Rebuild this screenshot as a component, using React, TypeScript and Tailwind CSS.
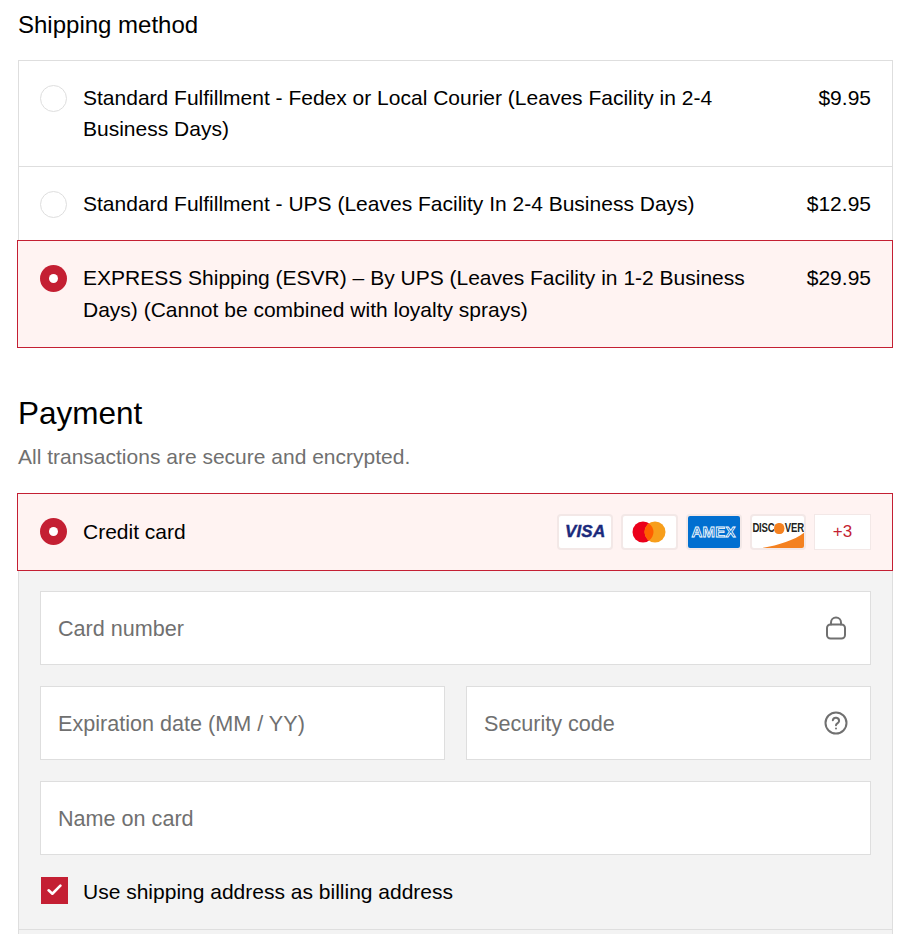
const font = { fontFamily: '"Liberation Sans", Arial, sans-serif' };

function Radio({ checked, className }: { checked?: boolean; className?: string }) {
  if (checked) {
    return (
      <span className={`flex h-[27px] w-[27px] shrink-0 items-center justify-center rounded-full bg-[#c41f33] ${className ?? ''}`}>
        <span className="h-[9px] w-[9px] rounded-full bg-white" />
      </span>
    );
  }
  return <span className={`h-[27px] w-[27px] shrink-0 rounded-full border border-[#dedede] bg-white ${className ?? ''}`} />;
}

function ShippingRow({ label, price, checked, last }: { label: string; price: string; checked?: boolean; last?: boolean }) {
  return (
    <div
      className={`flex items-start pt-[21px] ${
        checked
          ? '-ml-[2px] -mr-px border border-[#c41f33] bg-[#fff3f2] pb-[22px] pl-[22px] pr-[21px]'
          : `pb-[21px] px-[21px] ${last ? '' : 'border-b border-[#dedede]'}`
      }`}
    >
      <Radio checked={checked} className="mt-[3px]" />
      <div className="ml-4 flex-1 pr-14 text-[21px] leading-[31.5px] text-black">{label}</div>
      <div className="text-[21px] leading-[31.5px] text-black">{price}</div>
    </div>
  );
}

function CardBadge({ className, children }: { className?: string; children: React.ReactNode }) {
  return (
    <div className={`relative flex h-[36px] w-[56.25px] items-center justify-center overflow-hidden rounded-[4px] border-2 border-[#f3e8e7] ${className ?? 'bg-white'}`}>
      {children}
    </div>
  );
}

function Field({ placeholder, icon }: { placeholder: string; icon?: React.ReactNode }) {
  return (
    <div className="flex h-[74px] items-center justify-between border border-[#dedede] bg-white pl-[17px] pr-[22px] text-[21.6px] text-[#707070]">
      <span className="pt-[2px]">{placeholder}</span>
      {icon}
    </div>
  );
}

export default function App() {
  return (
    <div className="h-[934px] w-[903px] overflow-hidden bg-white pl-[18px] pr-[10px]" style={font}>
      <h2 className="pt-[9px] text-[24px] leading-[31px] text-black">Shipping method</h2>

      <div className="mt-[19.6px] border border-b-0 border-[#dedede]">
        <ShippingRow label="Standard Fulfillment - Fedex or Local Courier (Leaves Facility in 2-4 Business Days)" price="$9.95" />
        <ShippingRow label="Standard Fulfillment - UPS (Leaves Facility In 2-4 Business Days)" price="$12.95" last />
        <ShippingRow label="EXPRESS Shipping (ESVR) – By UPS (Leaves Facility in 1-2 Business Days) (Cannot be combined with loyalty sprays)" price="$29.95" checked />
      </div>

      <h2 className="mt-[45.4px] text-[31.5px] leading-[40px] text-black">Payment</h2>
      <p className="mt-[8px] text-[21px] leading-[31.5px] text-[#707070]">All transactions are secure and encrypted.</p>

      <div className="-ml-px mt-[20px] flex h-[78px] items-center border border-[#c41f33] bg-[#fff3f2] pl-[22px] pr-[21px]">
        <Radio checked />
        <span className="ml-4 flex-1 text-[21px] text-black">Credit card</span>
        <div className="flex items-center gap-[8px]">
          <CardBadge>
            <span className="text-[17px] font-bold italic tracking-[0.2px] text-[#1a2a7c]" style={{ WebkitTextStroke: '0.4px #1a2a7c' }}>
              VISA
            </span>
          </CardBadge>
          <CardBadge>
            <svg width="34" height="22" viewBox="0 0 34 22">
              <circle cx="11" cy="11" r="10.5" fill="#eb001b" />
              <circle cx="23" cy="11" r="10.5" fill="#f79e1b" />
              <path d="M17 2.4a10.5 10.5 0 0 1 0 17.2a10.5 10.5 0 0 1 0-17.2z" fill="#ff5f00" />
            </svg>
          </CardBadge>
          <CardBadge className="bg-[#016fd0]">
            <span className="text-[15px] font-bold tracking-[0.2px] text-[#016fd0]" style={{ WebkitTextStroke: '0.8px white' }}>
              AMEX
            </span>
          </CardBadge>
          <CardBadge>
            <svg className="absolute inset-0" width="53" height="32" viewBox="0 0 53 32">
              <path d="M10 32C28 29 43 24 53 16V32z" fill="#f48120" />
            </svg>
            <span className="relative -mt-[7px] flex shrink-0 scale-x-[0.8] items-center whitespace-nowrap text-[12px] font-bold tracking-[-0.3px] text-[#231f20]">
              DISC
              <span className="inline-block h-[11px] w-[13px] rounded-full bg-[#f48120]" />
              VER
            </span>
          </CardBadge>
          <div className="flex h-[36px] w-[57px] items-center justify-center border border-[#f3e8e7] bg-white text-[17px] text-[#c41f33]">+3</div>
        </div>
      </div>

      <div className="border-x border-[#dedede] bg-[#f3f3f3] px-[21px] pt-[20px]">
        <div className="flex flex-col gap-[21px]">
          <Field
            placeholder="Card number"
            icon={
              <svg className="mr-px" width="22" height="24" viewBox="0 0 22 24" fill="none" stroke="#707070" strokeWidth="2" strokeLinecap="round" strokeLinejoin="round">
                <rect x="2" y="8.5" width="18" height="14" rx="3.5" />
                <path d="M6 8.5V6.5a5 5 0 0 1 10 0v2" />
              </svg>
            }
          />
          <div className="grid grid-cols-2 gap-[21px]">
            <Field placeholder="Expiration date (MM / YY)" />
            <Field
              placeholder="Security code"
              icon={
                <svg width="24" height="24" viewBox="0 0 24 24" fill="none" stroke="#707070" strokeWidth="2" strokeLinecap="round" strokeLinejoin="round">
                  <circle cx="12" cy="12" r="10.5" />
                  <path d="M8.8 9.2a3.2 3.2 0 0 1 6.3.8c0 2.1-3.1 2.6-3.1 4.2" />
                  <path d="M12 17.6h.01" />
                </svg>
              }
            />
          </div>
          <Field placeholder="Name on card" />
        </div>
        <div className="mt-[22px] flex h-[27px] items-center pl-px">
          <span className="flex h-[27px] w-[27px] shrink-0 items-center justify-center bg-[#c41f33]">
            <svg width="15" height="12" viewBox="0 0 14 11" fill="none" stroke="white" strokeWidth="2.4" strokeLinecap="round" strokeLinejoin="round">
              <path d="M1.5 5.8 5 9 12.5 1.5" />
            </svg>
          </span>
          <span className="ml-[15px] pt-[2px] text-[21px] text-black">Use shipping address as billing address</span>
        </div>
        <div className="-mx-[21px] mt-[25px] h-[10px] border-t border-[#dedede]" />
      </div>
    </div>
  );
}
